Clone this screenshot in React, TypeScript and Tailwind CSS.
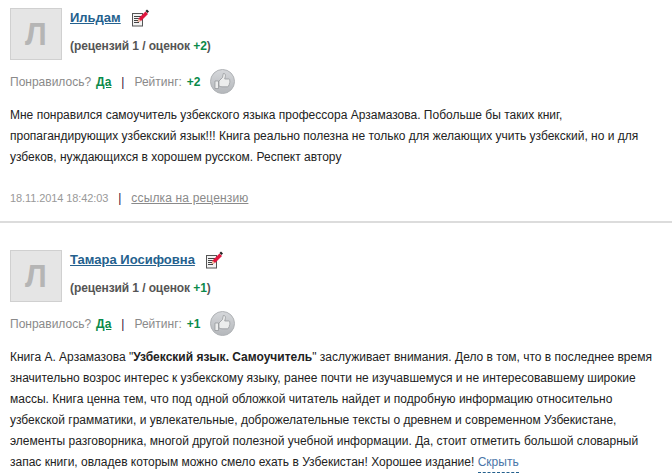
import React from 'react';

function NoteIcon() {
  return (
    <svg width="20" height="20" viewBox="0 0 20 20">
      <rect x="0.5" y="5.5" width="10" height="12.500" fill="#f3f3f3" stroke="#555" />
      <path d="M2 8.500h7M2 10.500h7M2 12.500h7M2 14.500h5" stroke="#444" strokeWidth="1" />
      <path d="M6.500 10.500l7-7 2.500 2.500-7 7-3.300.8z" fill="#e0173f" />
      <path d="M13.500 3l1.500-1.500 2 2-1.500 1.500z" fill="#222" />
      <path d="M6.500 10.500l2.500 2.500-3.300.8z" fill="#e8c9a0" />
    </svg>
  );
}

function ThumbIcon() {
  return (
    <svg width="25" height="25" viewBox="0 0 25 25">
      <defs>
        <linearGradient id="thumb-bg" x1="0" y1="0" x2="0" y2="1">
          <stop offset="0" stopColor="#d6d8db" />
          <stop offset="1" stopColor="#b4b7bb" />
        </linearGradient>
      </defs>
      <circle cx="12.500" cy="12.500" r="12" fill="url(#thumb-bg)" stroke="#b0b3b6" />
      <path d="M5 12h3.500v7.500H5z" fill="#eceded" stroke="#8f9295" strokeWidth="0.7" />
      <path d="M9 12l3.500-3.500.8-4c1.800-.2 2.500 1.200 2 3l-.6 2.500h4c1.200 0 1.400 1.200.8 2 .7.700.5 1.700-.2 2.100.4.800.1 1.600-.6 2 .2 1-.5 1.700-1.400 1.700H12c-1.300 0-2-.5-3-.8z" fill="#eceded" stroke="#8f9295" strokeWidth="0.7" />
    </svg>
  );
}

function Review({ name, score, children, footer }: { name: string; score: string; children: React.ReactNode; footer?: boolean }) {
  return (
    <div className="pl-[10px]">
      <div className="flex gap-2">
        <div className="w-[52px] h-[52px] shrink-0 bg-[#e5e5e5] border border-[#d0d0d0] flex items-center justify-center text-[#b5b5b5] font-bold text-[31px] leading-none">
          Л
        </div>
        <div>
          <div className="flex items-start gap-[11px] h-[26px]">
            <a className="text-[13px] leading-[20px] font-bold text-[#24618e] underline">{name}</a>
            <NoteIcon />
          </div>
          <div className="mt-[3px] text-[12px] leading-[18px] font-bold tracking-[-0.1px] text-[#555]">
            (рецензий 1 / оценок <span className="text-[#0a8a4a]">{score}</span>)
          </div>
        </div>
      </div>
      <div className="mt-[9px] flex items-center h-[25px] text-[12px] text-[#8a8a8a]">
        <span>Понравилось?</span>
        <a className="ml-[5px] font-bold text-[#0a8a4a] underline">Да</a>
        <span className="ml-[10px] mr-[10px] text-[#3a0f3a]">|</span>
        <span>Рейтинг:</span>
        <span className="ml-[5px] font-bold text-[#0a8a4a]">{score}</span>
        <span className="ml-[9px]"><ThumbIcon /></span>
      </div>
      <div className="mt-[11px] pr-[8px] text-[12px] leading-[21px] text-[#222]">{children}</div>
      {footer && (
        <div className="mt-[23px] flex items-center h-[14px] text-[#999]">
          <span className="text-[11px] tracking-[-0.1px]">18.11.2014 18:42:03</span>
          <span className="ml-[10px] mr-[10px] text-[12px] text-[#3a0f3a]">|</span>
          <a className="text-[12px] tracking-[0.15px] text-[#8a8a8a] underline">ссылка на рецензию</a>
        </div>
      )}
    </div>
  );
}

export default function App() {
  return (
    <div className="w-[672px] h-[476px] overflow-hidden bg-white pt-[8px] font-['Liberation_Sans',Arial,sans-serif]">
      <Review name="Ильдам" score="+2" footer>
        Мне понравился самоучитель узбекского языка профессора Арзамазова. Побольше бы таких книг, пропагандирующих узбекский язык!!! Книга реально полезна не только для желающих учить узбекский, но и для узбеков, нуждающихся в хорошем русском. Респект автору
      </Review>
      <div className="mt-[16px] mb-[27px] h-[2px] bg-[#dcdcdc]" />
      <Review name="Тамара Иосифовна" score="+1">
        Книга А. Арзамазова "<b>Узбекский язык. Самоучитель</b>" заслуживает внимания. Дело в том, что в последнее время значительно возрос интерес к узбекскому языку, ранее почти не изучавшемуся и не интересовавшему широкие массы. Книга ценна тем, что под одной обложкой читатель найдет и подробную информацию относительно узбекской грамматики, и увлекательные, доброжелательные тексты о древнем и современном Узбекистане, элементы разговорника, многой другой полезной учебной информации. Да, стоит отметить большой словарный запас книги, овладев которым можно смело ехать в Узбекистан! Хорошее издание!{' '}
        <a className="text-[#4a76a8] border-b border-dashed border-[#24618e] pb-[3px]">Скрыть</a>
      </Review>
    </div>
  );
}
